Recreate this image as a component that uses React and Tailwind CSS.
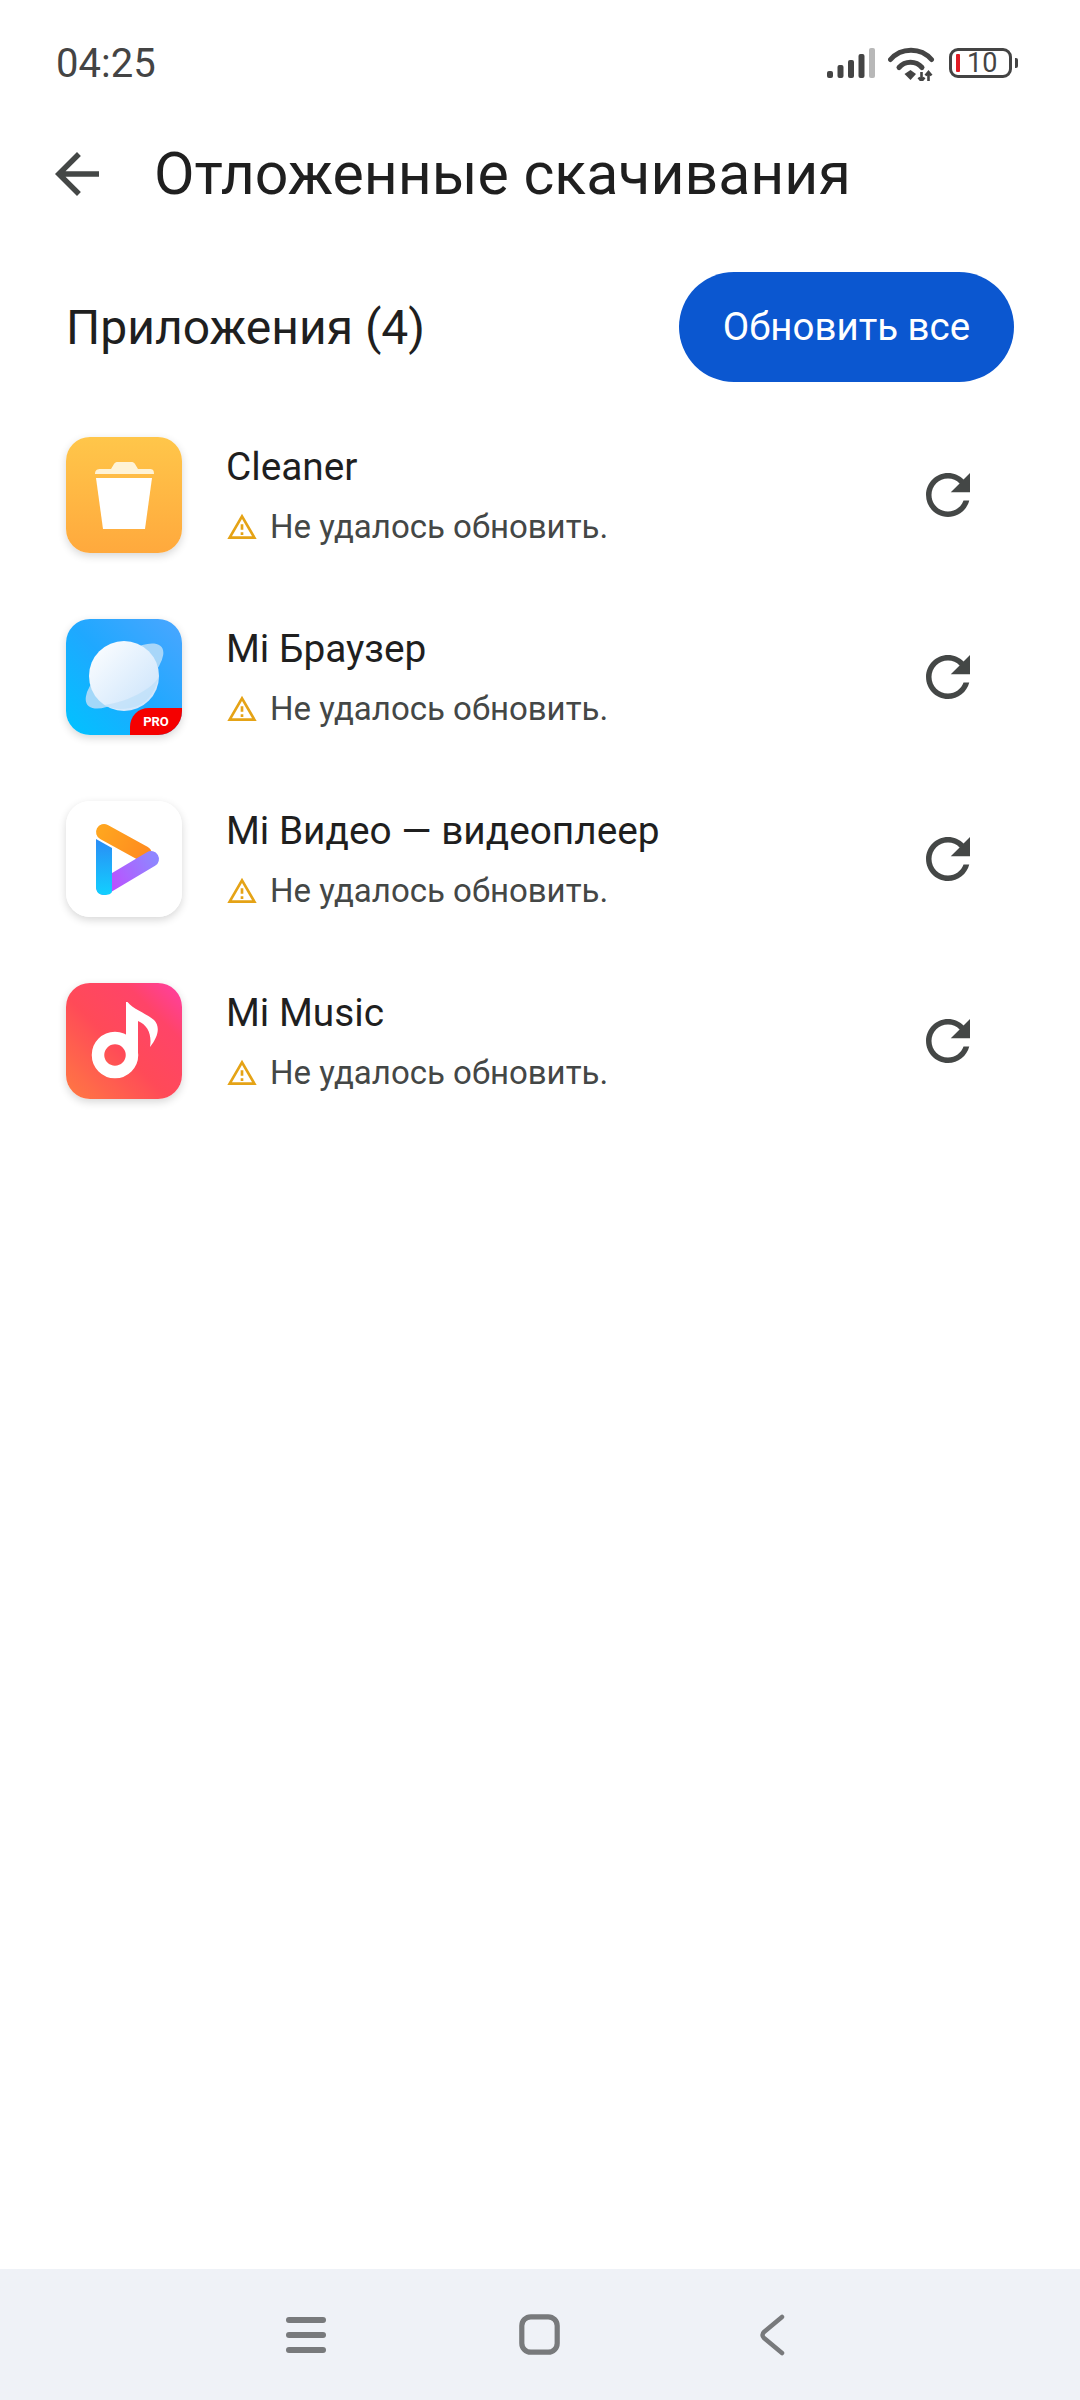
import React from 'react';

const FONT = "font-['Roboto','Noto_Sans',sans-serif]";

function SignalIcon() {
  const bars = [
    { x: 0, h: 7 },
    { x: 10.5, h: 13 },
    { x: 21, h: 18 },
    { x: 31.5, h: 24 },
    { x: 42, h: 30, fill: '#b8b8b8' },
  ];
  return (
    <svg width="48" height="30" viewBox="0 0 48 30">
      {bars.map((b) => (
        <rect key={b.x} x={b.x} y={30 - b.h} width="6" height={b.h} rx="2" fill={b.fill || '#444444'} />
      ))}
    </svg>
  );
}

function WifiIcon() {
  return (
    <svg width="47" height="35" viewBox="0 0 47 35" fill="none">
      <path d="M2.5 13.5C13 1 33 1 43.5 13.5" stroke="#444444" strokeWidth="5" strokeLinecap="round" />
      <path d="M11 21.5C17 14.5 28 14.5 34 21.5" stroke="#444444" strokeWidth="5" strokeLinecap="round" />
      <path d="M16.5 28L22.5 24L28 28L22.5 34Z" fill="#444444" />
      <path d="M33.5 26V35M30.5 31.5L33.5 35L36.5 31.5" stroke="#444444" strokeWidth="2.6" />
      <path d="M40.5 35V26M37.5 29.5L40.5 26L43.5 29.5" stroke="#444444" strokeWidth="2.6" />
    </svg>
  );
}

function Battery() {
  return (
    <div className="flex items-center">
      <div className="flex h-[30px] w-[63px] items-center rounded-[9px] border-[3px] border-[#444444] pl-[4px]">
        <div className="h-[18px] w-[4px] rounded-[1px] bg-[#e01b24]" />
        <span className="ml-[7px] text-[27px] leading-none text-[#444444]">10</span>
      </div>
      <div className="ml-[3px] h-[10px] w-[3px] rounded-r-[2px] bg-[#444444]" />
    </div>
  );
}

function StatusBar() {
  return (
    <div className="flex h-[126px] items-center pl-[56px] pr-[62px]">
      <span className="mt-[2px] text-[40px] leading-none text-[#444444]">04:25</span>
      <div className="ml-auto flex items-center">
        <SignalIcon />
        <div className="ml-[13px]">
          <WifiIcon />
        </div>
        <div className="ml-[14px]">
          <Battery />
        </div>
      </div>
    </div>
  );
}

function CleanerIcon() {
  return (
    <svg width="116" height="116" viewBox="0 0 116 116">
      <defs>
        <linearGradient id="cleanerBg" x1="0" y1="0" x2="0" y2="1">
          <stop offset="0" stopColor="#ffc64a" />
          <stop offset="1" stopColor="#ffa93d" />
        </linearGradient>
      </defs>
      <rect width="116" height="116" fill="url(#cleanerBg)" />
      <path d="M29 37C29 33 31 32 35 32H45L48 27C49 25.5 50 25 52 25H65C67 25 68 25.5 69 27L72 32H83C87 32 88 33 88 37Z" fill="#fff3d6" />
      <path d="M30 41H86L79 92H37Z" fill="#ffffff" />
    </svg>
  );
}

function BrowserIcon() {
  return (
    <svg width="116" height="116" viewBox="0 0 116 116">
      <defs>
        <linearGradient id="browserBg" x1="0" y1="1" x2="1" y2="0">
          <stop offset="0" stopColor="#00c3ff" />
          <stop offset="0.5" stopColor="#1fa8ff" />
          <stop offset="1" stopColor="#4ba6ff" />
        </linearGradient>
        <linearGradient id="planet" x1="0" y1="0" x2="1" y2="1">
          <stop offset="0" stopColor="#ffffff" />
          <stop offset="1" stopColor="#c8e2fb" />
        </linearGradient>
      </defs>
      <rect width="116" height="116" fill="url(#browserBg)" />
      <ellipse cx="58.5" cy="57" rx="47" ry="19" transform="rotate(-38 58.5 57)" fill="#b4dcf8" fillOpacity="0.9" />
      <circle cx="58" cy="57" r="35" fill="url(#planet)" />
      <path d="M64 89C79 87 88 76 93 58C85 70 65 82 38 86C45 90 55 91 64 89Z" fill="#b6dcf8" fillOpacity="0.55" />
      <path d="M64 116V108C64 97 72 89 83 89H116V116Z" fill="#f50000" />
      <text x="90" y="107" textAnchor="middle" fontSize="13" fontWeight="700" fill="#ffffff" fontFamily="Roboto, sans-serif">
        PRO
      </text>
    </svg>
  );
}

function VideoIcon() {
  return (
    <svg width="116" height="116" viewBox="0 0 116 116" fill="none">
      <defs>
        <linearGradient id="vidOrange" gradientUnits="userSpaceOnUse" x1="35" y1="30" x2="82" y2="55">
          <stop offset="0" stopColor="#ffa51f" />
          <stop offset="1" stopColor="#ff8a1f" />
        </linearGradient>
        <linearGradient id="vidPurple" gradientUnits="userSpaceOnUse" x1="40" y1="85" x2="88" y2="58">
          <stop offset="0" stopColor="#c04bff" />
          <stop offset="1" stopColor="#8f86ff" />
        </linearGradient>
        <linearGradient id="vidBlue" gradientUnits="userSpaceOnUse" x1="38" y1="38" x2="38" y2="94">
          <stop offset="0" stopColor="#2a8cf5" />
          <stop offset="1" stopColor="#12d0ff" />
        </linearGradient>
      </defs>
      <rect width="116 " height="116" fill="#ffffff" />
      <path d="M38 31L78 53" stroke="url(#vidOrange)" strokeWidth="16" strokeLinecap="round" />
      <path d="M38 86L85 58" stroke="url(#vidPurple)" strokeWidth="16" strokeLinecap="round" />
      <path d="M30 38L46 47V90C46 93 42 94 38 94C33 94 30 91 30 86Z" fill="url(#vidBlue)" />
    </svg>
  );
}

function MusicIcon() {
  return (
    <svg width="116" height="116" viewBox="0 0 116 116" fill="none">
      <defs>
        <linearGradient id="musicBg" x1="0" y1="1" x2="1" y2="0">
          <stop offset="0" stopColor="#ff7a42" />
          <stop offset="0.45" stopColor="#ff4a58" />
          <stop offset="0.75" stopColor="#ff4468" />
          <stop offset="1" stopColor="#ff3fa6" />
        </linearGradient>
      </defs>
      <rect width="116" height="116" fill="url(#musicBg)" />
      <circle cx="49" cy="72" r="17" stroke="#ffffff" strokeWidth="12.5" />
      <path d="M60 19H61.5C68 27 80 30 88 37C94 43 93 53 84 64C86 52 82 42 72 38V72H60Z" fill="#ffffff" />
    </svg>
  );
}

function AppIconBox({ children }) {
  return (
    <div className="h-[116px] w-[116px] shrink-0 overflow-hidden rounded-[24px] shadow-[0_3px_8px_rgba(0,0,0,0.16)]">
      {children}
    </div>
  );
}

function WarningIcon() {
  return (
    <svg width="32" height="32" viewBox="0 0 24 24" fill="#e5a316" className="shrink-0">
      <path d="M12 5.99L19.53 19H4.47L12 5.99M12 2L1 21h22L12 2zm1 14h-2v2h2v-2zm0-6h-2v4h2v-4z" />
    </svg>
  );
}

function RefreshIcon() {
  return (
    <svg width="66" height="66" viewBox="0 0 24 24" fill="#444746" className="shrink-0">
      <path d="M17.65 6.35C16.2 4.9 14.21 4 12 4c-4.42 0-7.99 3.58-7.99 8s3.57 8 7.99 8c3.73 0 6.84-2.55 7.73-6h-2.08c-.82 2.33-3.04 4-5.65 4-3.31 0-6-2.69-6-6s2.69-6 6-6c1.66 0 3.14.69 4.22 1.78L13 11h7V4l-2.35 2.35z" />
    </svg>
  );
}

const APPS = [
  { name: 'Cleaner', icon: <CleanerIcon /> },
  { name: 'Mi Браузер', icon: <BrowserIcon /> },
  { name: 'Mi Видео — видеоплеер', icon: <VideoIcon /> },
  { name: 'Mi Music', icon: <MusicIcon /> },
];

function AppRow({ app }) {
  return (
    <div className="flex h-[182px] items-center pl-[66px] pr-[99px]">
      <AppIconBox>{app.icon}</AppIconBox>
      <div className="ml-[44px] flex flex-col">
        <span className="text-[38.8px] leading-[48px] text-[#1f1f1f]">{app.name}</span>
        <div className="mt-[16px] flex h-[40px] items-center">
          <WarningIcon />
          <span className="ml-[12px] text-[33px] leading-[40px] text-[#444746]">Не удалось обновить.</span>
        </div>
      </div>
      <div className="ml-auto">
        <RefreshIcon />
      </div>
    </div>
  );
}

function NavBar() {
  return (
    <div className="mt-auto flex h-[131px] items-center bg-[#eff2f7]">
      <svg width="40" height="36" viewBox="0 0 40 36" className="ml-[286px]" fill="#787a7c">
        <rect x="0" y="0" width="40" height="6" rx="3" />
        <rect x="0" y="15" width="40" height="6" rx="3" />
        <rect x="0" y="30" width="40" height="6" rx="3" />
      </svg>
      <svg width="41" height="41" viewBox="0 0 41 41" className="ml-[193px]" fill="none">
        <rect x="2.8" y="2.8" width="35.4" height="35.4" rx="9" stroke="#787a7c" strokeWidth="5.2" />
      </svg>
      <svg width="26" height="42" viewBox="0 0 26 42" className="ml-[199px]" fill="none">
        <path d="M23 3L5 18C3 19.8 3 22.2 5 24L23 39" stroke="#787a7c" strokeWidth="4.5" strokeLinecap="round" />
      </svg>
    </div>
  );
}

export default function App() {
  return (
    <div className={`flex h-[2400px] w-[1080px] flex-col bg-white ${FONT}`}>
      <StatusBar />

      <div className="flex h-[96px] items-center">
        <svg width="66" height="66" viewBox="0 0 24 24" fill="#444746" className="ml-[44px] shrink-0">
          <path d="M20 11H7.83l5.59-5.59L12 4l-8 8 8 8 1.41-1.41L7.83 13H20v-2z" />
        </svg>
        <h1 className="mb-[2px] ml-[44px] text-[59px] font-normal leading-none text-[#1f1f1f]">Отложенные скачивания</h1>
      </div>

      <div className="mt-[50px] flex items-center pl-[66px] pr-[66px]">
        <span className="mt-[2px] text-[48px] leading-none text-[#1f1f1f]">Приложения (4)</span>
        <button
          type="button"
          className="ml-auto flex h-[110px] w-[335px] items-center justify-center rounded-full bg-[#0b57d0] text-[38.5px] text-white"
        >
          Обновить все
        </button>
      </div>

      <div className="mt-[22px] flex flex-col">
        {APPS.map((app) => (
          <AppRow key={app.name} app={app} />
        ))}
      </div>

      <NavBar />
    </div>
  );
}
